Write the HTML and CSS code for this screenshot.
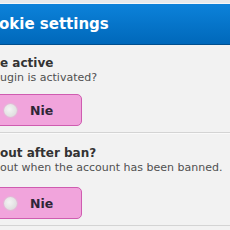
FILE: index.html
```html
<!DOCTYPE html>
<html lang="en">
<head>
  <meta charset="UTF-8" />
  <title>Cookie settings</title>
  <link rel="stylesheet" href="styles.css">
</head>
<body>
<div class="topbar"></div>
<div class="header">
  <h2>okie settings</h2>
</div>
<div class="settings">
  <!-- Plugin active -->
  <div class="setting">
    <div class="label">e active</div>
    <div class="desc">ugin is activated?</div>
    <button class="toggle"><span class="dot"></span>Nie</button>
  </div>
  <!-- Logout after ban -->
  <div class="setting second">
    <div class="label">out after ban?</div>
    <div class="desc">out when the account has been banned.</div>
    <button class="toggle"><span class="dot"></span>Nie</button>
  </div>
</div>
</body>
</html>
```

FILE: styles.css
```css
body {
  margin: 0;
  width: 230px;
  overflow: hidden;
  font-family: 'DejaVu Sans', Verdana, sans-serif;
  background: #f2f2f2;
}
.topbar {
  height: 4px;
  background: #e7e9eb;
  border-bottom: 1px solid #f4f6f8;
  box-sizing: border-box;
}
.header {
  height: 41px;
  background: linear-gradient(#0c82da, #0068ba);
  border-bottom: 1px solid #004f8e;
  box-sizing: border-box;
  overflow: hidden;
}
.header h2 {
  margin: 0 0 0 -1px;
  font-size: 15px;
  line-height: 40px;
  color: #fff;
  white-space: nowrap;
}
.setting {
  padding: 11px 0 6px;
  border-bottom: 1px solid #d4d4d4;
  box-shadow: 0 1px 0 #fafafa;
  overflow: hidden;
}
.setting.second {
  padding-top: 13px;
}
.setting.second .toggle {
  margin-top: 13px;
}
.label {
  font-size: 12px;
  line-height: 14px;
  font-weight: bold;
  color: #333;
  white-space: nowrap;
}
.desc {
  margin-top: 1px;
  font-size: 11px;
  line-height: 13px;
  color: #505050;
  white-space: nowrap;
}
.toggle {
  display: flex;
  align-items: center;
  gap: 13px;
  width: 87px;
  height: 32px;
  margin: 10px 0 0 -5px;
  padding: 0 0 0 8px;
  border: 1px solid #cf5cb0;
  border-radius: 5px;
  background: #f1a4dc;
  font-family: 'DejaVu Sans', Verdana, sans-serif;
  font-size: 12.5px;
  font-weight: bold;
  color: #2e2636;
  box-sizing: border-box;
}
.dot {
  width: 13px;
  height: 13px;
  border-radius: 50%;
  background: radial-gradient(circle at 40% 40%, #f4f4f4, #d6d6d6);
  box-shadow: 0 0 0 1px #e2b8d6;
}
```
